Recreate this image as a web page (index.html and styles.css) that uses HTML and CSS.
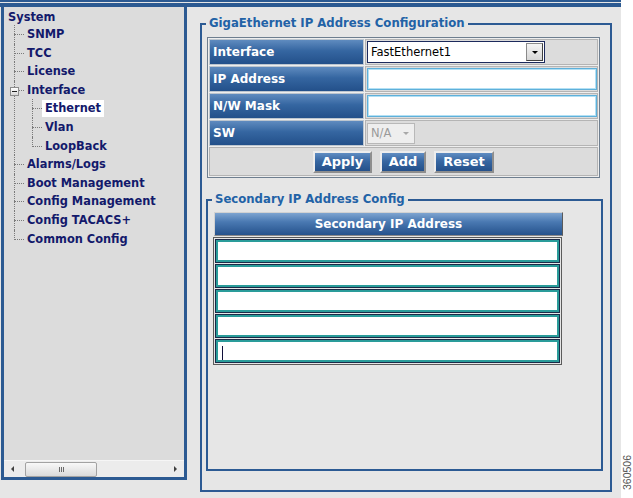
FILE: index.html
```html
<!DOCTYPE html>
<html lang="en">
<head>
    <meta charset="UTF-8">
    <meta name="viewport" content="width=device-width, initial-scale=1.0">
    <title>Interface - Ethernet</title>
    <link rel="stylesheet" href="styles.css">
</head>
<body>
    <div class="screen">
        <div class="app">
            <div class="topbar"></div>
            <div class="main">

                <!-- Navigation tree -->
                <div class="nav">
                    <div class="tree">
                        <div class="root">System</div>
                        <ul class="branch">
                            <li><span class="node">SNMP</span></li>
                            <li><span class="node">TCC</span></li>
                            <li><span class="node">License</span></li>
                            <li class="open">
                                <span class="toggle"></span>
                                <span class="node">Interface</span>
                                <ul class="branch sub">
                                    <li><span class="node current">Ethernet</span></li>
                                    <li><span class="node">Vlan</span></li>
                                    <li><span class="node">LoopBack</span></li>
                                </ul>
                            </li>
                            <li><span class="node">Alarms/Logs</span></li>
                            <li><span class="node">Boot Management</span></li>
                            <li><span class="node">Config Management</span></li>
                            <li><span class="node">Config TACACS+</span></li>
                            <li><span class="node">Common Config</span></li>
                        </ul>
                    </div>
                    <div class="hscroll">
                        <span class="arrow left"></span>
                        <div class="track">
                            <div class="thumb"><span class="grip"></span></div>
                        </div>
                        <span class="arrow right"></span>
                    </div>
                </div>

                <!-- Configuration form -->
                <div class="content">
                    <fieldset class="group">
                        <legend>GigaEthernet IP Address Configuration</legend>
                        <table class="cfg">
                            <tr>
                                <td class="lbl">Interface</td>
                                <td class="val">
                                    <div class="select">
                                        <span class="choice">FastEthernet1</span>
                                        <span class="drop"><span class="tri"></span></span>
                                    </div>
                                </td>
                            </tr>
                            <tr>
                                <td class="lbl">IP Address</td>
                                <td class="val"><input type="text" class="ip"></td>
                            </tr>
                            <tr>
                                <td class="lbl">N/W Mask</td>
                                <td class="val"><input type="text" class="ip"></td>
                            </tr>
                            <tr>
                                <td class="lbl">SW</td>
                                <td class="val">
                                    <div class="select off">
                                        <span class="choice">N/A</span>
                                        <span class="tri grey"></span>
                                    </div>
                                </td>
                            </tr>
                            <tr>
                                <td class="actions" colspan="2">
                                    <div class="buttons">
                                        <button class="btn apply">Apply</button>
                                        <button class="btn add">Add</button>
                                        <button class="btn reset">Reset</button>
                                    </div>
                                </td>
                            </tr>
                        </table>

                        <fieldset class="group inner">
                            <legend>Secondary IP Address Config</legend>
                            <div class="sec-head">Secondary IP Address</div>
                            <div class="sec-list">
                                <input type="text" class="sec">
                                <input type="text" class="sec">
                                <input type="text" class="sec">
                                <input type="text" class="sec">
                                <div class="field">
                                    <input type="text" class="sec">
                                    <span class="caret"></span>
                                </div>
                            </div>
                        </fieldset>
                    </fieldset>
                </div>
            </div>
        </div>
        <div class="strip"><span class="fig">360506</span></div>
    </div>
</body>
</html>
```

FILE: styles.css
```css
html, body {
    margin: 0;
    padding: 0;
    background-color: #FFFFFF;
    overflow: hidden;
}
.screen {
    display: flex;
    width: 633px;
    height: 498px;
}
.app {
    width: 621px;
    height: 498px;
    background-color: #E6E6E6;
    display: flex;
    flex-direction: column;
}
.topbar {
    height: 1px;
    border-top: 2px solid #2C5A92; /* Blue frame edge */
    border-bottom: 4px solid #2C5A92;
    background-color: #E6E6E6;
}
.main {
    display: flex;
    align-items: flex-start;
}

/* Left navigation frame */
.nav {
    width: 180px;
    height: 470px;
    margin-left: 1px;
    border: 3px solid #2C5A92;
    border-top: none;
    background-color: #DCDCDC;
    display: flex;
    flex-direction: column;
}
.tree {
    padding: 3px 0 0 4px;
    font-family: "DejaVu Sans", Verdana, sans-serif;
    font-weight: bold;
    font-size: 11.4px;
    color: #13196B; /* Navy text */
}
.root {
    line-height: 15px;
}
.branch {
    list-style: none;
    margin: 0 0 0 6px;
    padding: 0;
}
.branch li {
    position: relative;
    padding-left: 13px;
    line-height: 18.6px;
    white-space: nowrap;
}
.branch li::before {
    content: '';
    position: absolute;
    left: 0;
    top: 9px;
    width: 10px;
    border-top: 1px dotted #7A7A7A;
}
.branch li::after {
    content: '';
    position: absolute;
    left: 0;
    top: 0;
    bottom: 0;
    border-left: 1px dotted #7A7A7A;
}
.branch li:last-child::after {
    bottom: auto;
    height: 10px;
}
.branch.sub {
    margin-left: 5px;
}
.toggle {
    position: absolute;
    left: -4px;
    top: 6px;
    width: 7px;
    height: 7px;
    border: 1px solid #8C8C8C;
    background: linear-gradient(#FFFFFF, #D8D8D8);
    z-index: 1;
}
.toggle::after {
    content: '';
    position: absolute;
    left: 1px;
    top: 3px;
    width: 5px;
    height: 1px;
    background-color: #202020;
}
.current {
    display: inline-block;
    background-color: #FFFFFF;
    padding: 0 3px;
    margin-left: -3px;
    line-height: 17px;
}

/* Horizontal scrollbar */
.hscroll {
    margin-top: auto;
    height: 16px;
    border-top: 1px solid #F6F6F6;
    background-color: #ECECEC;
    display: flex;
    align-items: center;
}
.arrow {
    width: 17px;
    display: flex;
    justify-content: center;
}
.arrow::before {
    content: '';
    border-top: 3px solid transparent;
    border-bottom: 3px solid transparent;
}
.arrow.left::before {
    border-right: 3px solid #404040;
}
.arrow.right::before {
    border-left: 3px solid #404040;
}
.track {
    flex: 1;
}
.thumb {
    width: 70px;
    height: 13px;
    margin-left: 4px;
    border: 1px solid #A2A2A2;
    border-radius: 2px;
    background: linear-gradient(#F8F8F8, #DADADA);
    display: flex;
    justify-content: center;
    align-items: center;
}
.grip {
    width: 5px;
    height: 5px;
    background: repeating-linear-gradient(to right, #6A6A6A 0 1px, transparent 1px 2px);
}

/* Right content */
.content {
    flex: 1;
}
.group {
    box-sizing: border-box;
    width: 412px;
    height: 476px;
    margin: 9px 0 0 13px;
    padding: 6px 7px 0 4px;
    border: 2px solid #2C5A93; /* Blue frame */
    min-inline-size: 0;
}
.group legend {
    padding: 0 3px;
    font-family: "DejaVu Sans", Verdana, sans-serif;
    font-weight: bold;
    font-size: 11.7px;
    line-height: 15px;
    color: #2262A6;
}
.cfg {
    width: 393px;
    margin-left: 1px;
    border-collapse: separate;
    border-spacing: 1px;
    border: 1px solid #6E7E8F;
    background-color: #EEEEEE;
}
.cfg td {
    padding: 0;
    box-sizing: border-box;
    height: 26px;
}
.cfg .lbl {
    width: 156px;
    padding-left: 3px;
    border: 1px solid #BDC6CF;
    background: linear-gradient(#5F8BBF 0%, #3566A1 45%, #23508A 100%);
    color: #FFFFFF;
    font-family: "DejaVu Sans", Verdana, sans-serif;
    font-weight: bold;
    font-size: 12px;
}
.cfg .val {
    padding-left: 1px;
    border: 1px solid #B4B4B4;
    background-color: #DCDCDC;
}
.select {
    box-sizing: border-box;
    display: flex;
    align-items: center;
    width: 178px;
    height: 22px;
    border: 1px solid #1C2A5C;
    background-color: #FFFFFF;
    font-family: "DejaVu Sans", Tahoma, sans-serif;
    font-size: 11.5px;
    color: #000000;
}
.choice {
    flex: 1;
    padding-left: 3px;
}
.drop {
    box-sizing: border-box;
    width: 17px;
    height: 18px;
    margin-right: 1px;
    border: 1px solid #8A8A8A;
    border-right-color: #404040;
    border-bottom-color: #404040;
    background: linear-gradient(#F4F4F4, #D6D6D6);
    display: flex;
    justify-content: center;
    align-items: center;
}
.tri {
    width: 0;
    height: 0;
    border-left: 3px solid transparent;
    border-right: 3px solid transparent;
    border-top: 3px solid #000000;
}
.select.off {
    width: 48px;
    height: 21px;
    border-color: #B8B8B8;
    background-color: #EEEEEE;
    color: #9A9A9A;
}
.tri.grey {
    border-top-color: #A8A8A8;
    margin-right: 5px;
}
.ip {
    box-sizing: border-box;
    display: block;
    width: 230px;
    height: 22px;
    margin: 0;
    border: 1px solid #5EB0DA;
    box-shadow: inset 0 0 0 1px #B3E0F4;
    background-color: #FFFFFF;
    outline: none;
}
.cfg .actions {
    height: 29px;
    border: 1px solid #B4B4B4;
    background-color: #DCDCDC;
}
.buttons {
    display: flex;
    justify-content: center;
    gap: 8px;
}
.btn {
    box-sizing: border-box;
    height: 22px;
    margin: 0;
    padding: 0;
    border: 2px solid;
    border-color: #EDEDED #8E8E8E #8E8E8E #EDEDED;
    background: linear-gradient(#5F8CC2 0%, #3767A2 45%, #24508A 100%);
    color: #FFFFFF;
    font-family: "DejaVu Sans", Verdana, sans-serif;
    font-weight: bold;
    font-size: 13px;
}
.btn.apply { width: 59px; }
.btn.add { width: 46px; }
.btn.reset { width: 60px; }

/* Secondary addresses */
.group.inner {
    width: 397px;
    height: 279px;
    margin: 14px 0 0 0;
    padding: 5px 0 0 4px;
}
.sec-head {
    box-sizing: border-box;
    width: 349px;
    height: 24px;
    margin-left: 2px;
    border: 1px solid #D2D2D2;
    border-right-color: #5A5A5A;
    border-bottom-color: #8A8A8A;
    background: linear-gradient(#7EA4D0 0%, #4A79B2 40%, #25528C 100%);
    color: #FFFFFF;
    font-family: "DejaVu Sans", Verdana, sans-serif;
    font-weight: bold;
    font-size: 12px;
    line-height: 22px;
    text-align: center;
}
.sec-list {
    box-sizing: border-box;
    width: 349px;
    margin: 1px 0 0 1px;
    padding: 1px 0 1px 1px;
    border: 1px solid #5B5B5B;
}
.sec {
    box-sizing: border-box;
    display: block;
    width: 343px;
    height: 22px;
    margin: 1px 0 3px 1px;
    border: 2px solid #2A9C9A; /* Teal field edge */
    box-shadow: 0 0 0 1px #1A2A48;
    background-color: #FFFFFF;
    outline: none;
}
.field {
    position: relative;
}
.field .sec {
    margin-bottom: 1px;
}
.caret {
    position: absolute;
    left: 7px;
    top: 6px;
    width: 1px;
    height: 14px;
    background-color: #10103A;
}

/* Figure number strip */
.strip {
    width: 12px;
    display: flex;
    flex-direction: column;
    justify-content: flex-end;
    align-items: center;
    padding-bottom: 8px;
}
.fig {
    writing-mode: vertical-rl;
    transform: rotate(180deg);
    font-family: "Liberation Sans", Arial, sans-serif;
    font-size: 10.5px;
    color: #555555;
}
```
